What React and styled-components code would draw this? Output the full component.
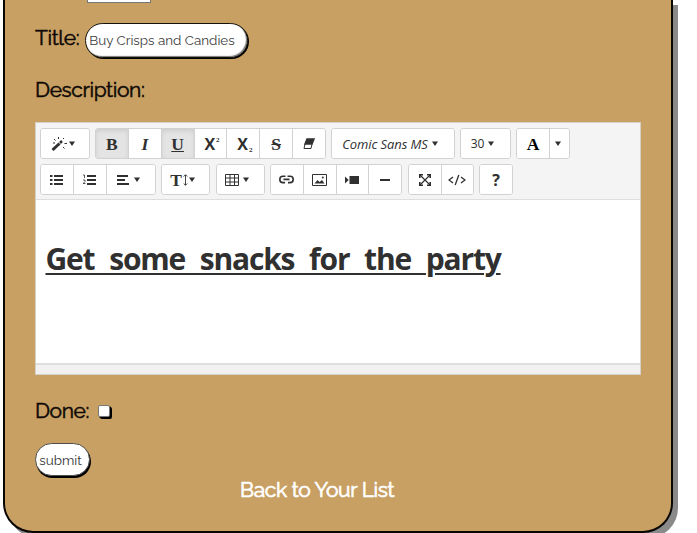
import React from "react";
import styled, { createGlobalStyle } from "styled-components";

const GlobalStyle = createGlobalStyle`
  *, *::before, *::after { box-sizing: border-box; }
  body { margin: 0; background: #fff; overflow: hidden; }
`;

const Page = styled.main`
  height: 533px;
  overflow: hidden;
  padding-left: 3px;
  font-family: Raleway, Lato, sans-serif;
  color: #0d0805;
`;

const Card = styled.form`
  width: 670px;
  height: 533px;
  padding: 0 31px 0 30px;
  display: flex;
  flex-direction: column;
  align-items: flex-start;
  background: #c8a063;
  border: 2px solid #090602;
  border-top: 0;
  border-radius: 0 0 30px 30px;
  box-shadow: 5px 5px 0 #8a8a8a;
`;

const PriorField = styled.div`
  width: 64px;
  height: 3px;
  margin-left: 52px;
  background: #fff;
  border: 1px solid #777;
  border-top: 0;
`;

const TitleRow = styled.div`
  display: flex;
  margin-top: 20px;
  height: 36px;
`;

const Label = styled.label`
  font-size: 21px;
  line-height: 30px;
  letter-spacing: ${(p) => p.$spacing || 0}px;
  -webkit-text-stroke: 0.5px currentColor;
  white-space: nowrap;
`;

const TitleInput = styled.div`
  width: 163px;
  height: 35px;
  margin-left: 6px;
  padding-left: 3px;
  border: 1px solid #15110c;
  border-radius: 17.5px;
  background: #fff;
  box-shadow: 1px 1px 0 #000, inset -1px -1px 1px #777;
  color: #404040;
  font-size: 13.4px;
  line-height: 33px;
  white-space: nowrap;
`;

const DescriptionLabel = styled(Label)`
  margin-top: 16px;
`;

const Editor = styled.section`
  width: 606px;
  height: 253px;
  margin-top: 17px;
  background: #fff;
  border: 1px solid #d6d1c8;
  display: flex;
  flex-direction: column;
`;

const Toolbar = styled.div`
  height: 77px;
  padding: 5px 0 0 4px;
  background: #f4f4f4;
  border-bottom: 1px solid #dedede;
`;

const ToolRow = styled.div`
  display: flex;
  gap: 5px;
  height: 31px;
  margin-bottom: 5px;
`;

const Group = styled.div`
  display: flex;
  border: 1px solid #d2d2d2;
  border-radius: 3px;
  overflow: hidden;
  background: #fff;
  width: ${(p) => p.$w}px;
  margin-left: ${(p) => p.$gap || 0}px;
`;

const Tool = styled.button`
  appearance: none;
  border: 0;
  border-right: 1px solid #d2d2d2;
  padding: 0 ${(p) => p.$slack || 0}px 0 0;
  flex: ${(p) => (p.$w ? `0 0 ${p.$w}px` : "1 1 0")};
  display: flex;
  align-items: center;
  justify-content: center;
  gap: ${(p) => p.$gap ?? 4}px;
  background: ${(p) => (p.$active ? "#e4e4e4" : "#fff")};
  box-shadow: ${(p) => (p.$active ? "inset 0 2px 4px #cdcdcd" : "none")};
  color: #303030;
  &:last-child { border-right: 0; }
  svg { display: block; flex: none; }
`;

const Glyph = styled.span`
  font: ${(p) => p.$font || "bold 17.5px 'Liberation Serif', serif"};
  line-height: 20px;
  text-decoration: ${(p) => p.$line || "none"};
  text-decoration-thickness: 1px;
  color: ${(p) => p.$color || "inherit"};
  white-space: nowrap;
`;

const FontName = styled.span`
  font: italic 13px "Comic Sans MS", "Open Sans", sans-serif;
  letter-spacing: ${(p) => p.$spacing}px;
  white-space: nowrap;
`;

const FontSize = styled.span`
  font: 12px "Open Sans", sans-serif;
`;

const Script = styled.span`
  display: flex;
  margin-left: 3px;
  font: bold 16px "Open Sans", sans-serif;
  line-height: 20px;
  sup, sub { font: bold 7px "Liberation Serif", serif; align-self: flex-start; margin: 2px 0 0 1px; }
  sub { align-self: flex-end; margin-bottom: 0; }
`;

const Content = styled.div`
  height: 163px;
  padding: 38px 10px 0 9.5px;
`;

const Heading = styled.p`
  margin: 0;
  color: #303030;
  font: bold 30px "Comic Sans MS", "Open Sans", sans-serif;
  line-height: 42px;
  letter-spacing: -1.2px;
  word-spacing: 8.2px;
  text-decoration: underline;
  text-decoration-thickness: 2px;
  text-underline-offset: 3px;
  white-space: nowrap;
`;

const StatusBar = styled.div`
  flex: 1;
  background: #f1f1f1;
  border-top: 2px solid #dedede;
`;

const DoneRow = styled.div`
  display: flex;
  margin-top: 21px;
  height: 30px;
`;

const Checkbox = styled.span`
  width: 12px;
  height: 12px;
  margin: 9px 0 0 9px;
  border: 1px solid #777;
  border-radius: 2px;
  background: #fff;
  box-shadow: 1px 1px 0 #000, 2px 2px 0 #000;
`;

const Submit = styled.button`
  width: 55px;
  height: 33px;
  margin-top: 17px;
  padding: 0 4px 0 0;
  border: 1px solid #4d4d4d;
  border-radius: 17px;
  background: #fff;
  box-shadow: 1px 2px 0 #000;
  color: #333;
  font: 13.4px Raleway, Lato, sans-serif;
`;

const BackLink = styled.a`
  margin: -2px 0 0 205px;
  color: #fff;
  font-size: 21px;
  line-height: 31px;
  letter-spacing: -0.36px;
  -webkit-text-stroke: 0.7px #fff;
  white-space: nowrap;
`;

const Icon = ({ w = 14, h = 14, children }) => (
  <svg width={w} height={h} viewBox={`0 0 ${w} ${h}`} fill="none" stroke="currentColor" strokeWidth="1.5">
    {children}
  </svg>
);

const Caret = () => (
  <svg width="6" height="5" viewBox="0 0 6 5"><path d="M0 .5h6L3 5Z" fill="#303030" /></svg>
);

const Wand = () => (
  <Icon w={16} h={16}>
    <path d="m1.5 14 7-6.5" strokeWidth="3" />
    <path d="m9 7 2-2" strokeWidth="2.5" />
    <path d="m3 3 1.5 1.5M7.5 1v2M13 2l-1 1M13.5 7.5H16M12 11l1.5 1.5M2 7h2" strokeWidth="1" />
  </Icon>
);
const List = () => (
  <Icon w={14} h={12}><path d="M4 2h9M4 6h9M4 10h9" strokeWidth="2" /><path d="M0 2h2.5M0 6h2.5M0 10h2.5" strokeWidth="2" /></Icon>
);
const OrderedList = () => (
  <Icon w={14} h={12}>
    <path d="M4 2h9M4 6h9M4 10h9" strokeWidth="2" />
    <path d="M0 1h1.5v3M0 6h2v1.5L0 9.5h2.5" strokeWidth=".8" />
  </Icon>
);
const Align = () => (
  <Icon w={12} h={12}><path d="M0 2h11M0 6h8M0 10h12" strokeWidth="2" /></Icon>
);
const Eraser = () => (
  <Icon w={12} h={12}>
    <path d="M4 1h7L9 6H2Z" fill="currentColor" />
    <path d="M2 6 1 10.5h7L9 6" strokeWidth="1" />
  </Icon>
);
const Height = () => (
  <Icon w={5} h={14}><path d="M2.5 2v10M.7 3.5 2.5 1.7l1.8 1.8M.7 10.5l1.8 1.8 1.8-1.8" strokeWidth=".9" /></Icon>
);
const Table = () => (
  <Icon w={14} h={12}><path d="M.5.5h13v11H.5ZM.5 4h13M.5 8h13M5 .5v11M9.5.5v11" strokeWidth="1" /></Icon>
);
const Link = () => (
  <Icon w={15} h={9}>
    <path d="M6.5 1.2H4a3.2 3.2 0 0 0 0 6.4h2M8.5 1.2H11a3.2 3.2 0 0 1 0 6.4H9M4.5 4.4h6" strokeWidth="1.6" />
  </Icon>
);
const Picture = () => (
  <Icon w={15} h={12}>
    <path d="M.5.5h14v11H.5Z" strokeWidth="1" />
    <path d="m2.5 9.5 3-3.5 2 2 2.5-2 2.5 3.5Z" fill="currentColor" stroke="none" />
    <circle cx="10.8" cy="3.5" r="1" fill="currentColor" stroke="none" />
  </Icon>
);
const Video = () => (
  <Icon w={14} h={10}><path d="M4.5 1H14v8H4.5ZM0 1.5 3.7 5 0 8.5Z" fill="currentColor" stroke="none" /></Icon>
);
const Rule = () => <Icon w={10} h={4}><path d="M0 2h10" strokeWidth="2" /></Icon>;
const Expand = () => (
  <Icon w={12} h={12}>
    <path d="m1 1 10 10M11 1 1 11" strokeWidth="1.2" />
    <path d="M.8 4V.8H4M8 .8h3.2V4M.8 8v3.2H4M8 11.2h3.2V8" strokeWidth="1.6" />
  </Icon>
);
const Code = () => (
  <Icon w={18} h={12}><path d="M5 3 1 6l4 3M13 3l4 3-4 3M10.8 1 7.2 11" strokeWidth="1.3" /></Icon>
);

export default function App() {
  return (
    <Page>
      <GlobalStyle />
      <Card>
        <PriorField />
        <TitleRow>
          <Label $spacing={-0.35}>Title:</Label>
          <TitleInput>Buy Crisps and Candies</TitleInput>
        </TitleRow>
        <DescriptionLabel $spacing={-0.38}>Description:</DescriptionLabel>
        <Editor>
          <Toolbar>
            <ToolRow>
              <Group $w={50}><Tool $gap={2} $slack={5}><Wand /><Caret /></Tool></Group>
              <Group $w={231}>
                <Tool $active><Glyph>B</Glyph></Tool>
                <Tool><Glyph $font="italic bold 17.5px 'Liberation Serif', serif">I</Glyph></Tool>
                <Tool $active><Glyph $line="underline">U</Glyph></Tool>
                <Tool><Script>X<sup>2</sup></Script></Tool>
                <Tool><Script>X<sub>2</sub></Script></Tool>
                <Tool><Glyph $font="bold 17.5px 'Liberation Serif', serif" $line="line-through">S</Glyph></Tool>
                <Tool><Eraser /></Tool>
              </Group>
              <Group $w={124}><Tool $slack={6}><FontName $spacing={-0.1}>Comic Sans MS</FontName><Caret /></Tool></Group>
              <Group $w={51}><Tool $slack={6}><FontSize>30</FontSize><Caret /></Tool></Group>
              <Group $w={54}>
                <Tool $w={33}><Glyph $color="#000">A</Glyph></Tool>
                <Tool $slack={3}><Caret /></Tool>
              </Group>
            </ToolRow>
            <ToolRow>
              <Group $w={116}>
                <Tool $w={33}><List /></Tool>
                <Tool $w={33}><OrderedList /></Tool>
                <Tool $gap={5} $slack={5}><Align /><Caret /></Tool>
              </Group>
              <Group $w={49}><Tool $gap={1} $slack={6}><Glyph>T</Glyph><Height /><Caret /></Tool></Group>
              <Group $w={49} $gap={1}><Tool $slack={7}><Table /><Caret /></Tool></Group>
              <Group $w={132}>
                <Tool><Link /></Tool>
                <Tool><Picture /></Tool>
                <Tool><Video /></Tool>
                <Tool><Rule /></Tool>
              </Group>
              <Group $w={66} $gap={1}><Tool><Expand /></Tool><Tool><Code /></Tool></Group>
              <Group $w={34}><Tool><Glyph $font="bold 16px 'Open Sans', sans-serif">?</Glyph></Tool></Group>
            </ToolRow>
          </Toolbar>
          <Content><Heading>Get some snacks for the party</Heading></Content>
          <StatusBar />
        </Editor>
        <DoneRow>
          <Label $spacing={-0.4}>Done:</Label>
          <Checkbox />
        </DoneRow>
        <Submit type="button">submit</Submit>
        <BackLink>Back to Your List</BackLink>
      </Card>
    </Page>
  );
}
